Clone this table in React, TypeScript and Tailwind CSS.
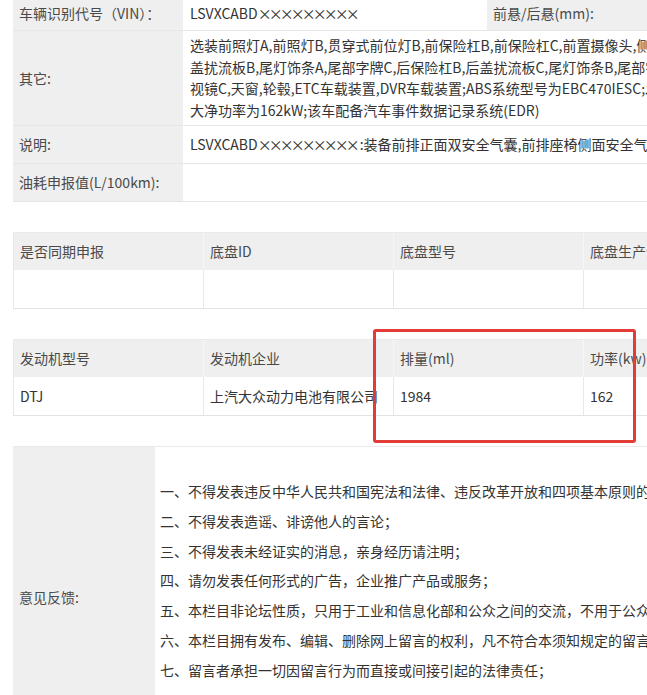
import React from "react";

const cellLabel = "bg-[#efefef] text-[#4a4a4a] px-[6px] flex items-center";
const cellValue = "bg-white text-[#333] px-[7px] flex items-center";

const chassisHead = ["是否同期申报", "底盘ID", "底盘型号", "底盘生产企业", "备注"];
const engineHead = ["发动机型号", "发动机企业", "排量(ml)", "功率(kw)", "备注"];
const engineRow = ["DTJ", "上汽大众动力电池有限公司", "1984", "162", ""];

const notes = [
  "一、不得发表违反中华人民共和国宪法和法律、违反改革开放和四项基本原则的言论；",
  "二、不得发表造谣、诽谤他人的言论；",
  "三、不得发表未经证实的消息，亲身经历请注明；",
  "四、请勿发表任何形式的广告，企业推广产品或服务；",
  "五、本栏目非论坛性质，只用于工业和信息化部和公众之间的交流，不用于公众之间的交流；",
  "六、本栏目拥有发布、编辑、删除网上留言的权利，凡不符合本须知规定的留言将被删除；",
  "七、留言者承担一切因留言行为而直接或间接引起的法律责任；",
];

// masked part of the VIN, the cjk × is full width so pull it in a bit
const Mask = () => <span className="tracking-[-3px] pr-[3px]">×××××××××</span>;

function GridTable({ head, row }: { head: string[]; row: string[] }) {
  return (
    <div className="border-b border-[#e3e3e3]">
      <div className="grid grid-cols-[190px_190px_190px_190px_190px] h-[38px] bg-[#efefef] border-t border-[#eaeaea]">
        {head.map((h, i) => (
          <div key={i} className="px-[6px] flex items-center text-[#4a4a4a] border-l border-[#f6f6f6] first:border-l-[#e8e8e8] whitespace-nowrap">
            {h}
          </div>
        ))}
      </div>
      <div className="grid grid-cols-[190px_190px_190px_190px_190px] h-[38px] bg-white">
        {row.map((c, i) => (
          <div key={i} className="px-[6px] flex items-center text-[#333] border-l border-[#e8e8e8] whitespace-nowrap overflow-hidden">
            {c}
          </div>
        ))}
      </div>
    </div>
  );
}

export default function App() {
  return (
    <div className="relative w-[647px] h-[695px] overflow-hidden bg-white text-[14px] font-['Noto_Sans_CJK_SC','Microsoft_YaHei',sans-serif]">
      <div className="w-[1100px] pl-[13px]">
        {/* basic info */}
        <div className="border-b border-[#e3e3e3]">
          <div className="flex h-[31px] border-b border-[#e6e6e6]">
            <div className={`${cellLabel} w-[170px] pb-[4px]`}>车辆识别代号（VIN）：</div>
            <div className={`${cellValue} w-[304px] pb-[4px]`}>
              LSVXCABD<Mask />
            </div>
            <div className={`${cellLabel} w-[190px] pb-[4px]`}>前悬/后悬(mm):</div>
            <div className={`${cellValue} flex-1 pb-[4px]`}></div>
          </div>
          <div className="flex h-[95px] border-b border-[#e6e6e6]">
            <div className={`${cellLabel} w-[170px]`}>其它:</div>
            <div className="flex-1 bg-white text-[#333] px-[7px] py-[4px] leading-[21.7px] whitespace-nowrap">
              <div>选装前照灯A,前照灯B,贯穿式前位灯B,前保险杠B,前保险杠C,前置摄像头,侧视摄像头,后视镜A,后视镜B,后</div>
              <div>盖扰流板B,尾灯饰条A,尾部字牌C,后保险杠B,后盖扰流板C,尾灯饰条B,尾部字牌D,尾部字牌E,后</div>
              <div>视镜C,天窗,轮毂,ETC车载装置,DVR车载装置;ABS系统型号为EBC470IESC;发动机最</div>
              <div>大净功率为162kW;该车配备汽车事件数据记录系统(EDR)</div>
            </div>
          </div>
          <div className="flex h-[38px] border-b border-[#e6e6e6]">
            <div className={`${cellLabel} w-[170px]`}>说明:</div>
            <div className={`${cellValue} flex-1 whitespace-nowrap`}>
              LSVXCABD<Mask />:装备前排正面双安全气囊,前排座椅侧面安全气囊,侧面安全气帘
            </div>
          </div>
          <div className="flex h-[37px]">
            <div className={`${cellLabel} w-[170px]`}>油耗申报值(L/100km):</div>
            <div className={`${cellValue} flex-1`}></div>
          </div>
        </div>

        <div className="h-[30px]" />
        <GridTable head={chassisHead} row={["", "", "", "", ""]} />

        <div className="h-[30px]" />
        <GridTable head={engineHead} row={engineRow} />

        <div className="h-[30px]" />
        {/* feedback notice */}
        <div className="flex h-[302px] border-t border-[#eaeaea]">
          <div className={`${cellLabel} w-[142px]`}>意见反馈:</div>
          <div className="flex-1 bg-white text-[#333] pl-[5px] pt-[30px] leading-[29.8px] whitespace-nowrap">
            {notes.map((n, i) => (
              <div key={i}>{n}</div>
            ))}
          </div>
        </div>
      </div>

      {/* red annotation box */}
      <div className="absolute left-[373px] top-[329px] w-[263px] h-[114px] border-[3px] border-[#e33b36] rounded-[3px]" />
    </div>
  );
}
